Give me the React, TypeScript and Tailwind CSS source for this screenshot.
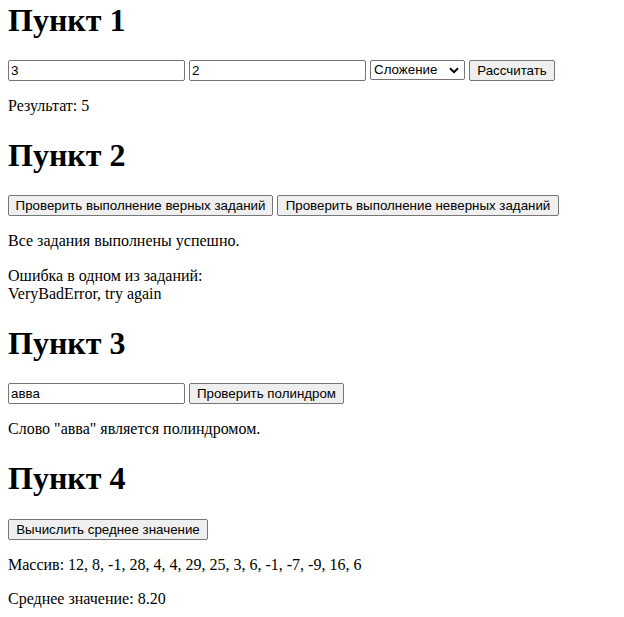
import React from "react";

const serif = { fontFamily: '"Liberation Serif", "Times New Roman", serif' };

const inputCls =
  "box-border h-[21px] w-[177px] rounded-[2px] border border-[#767676] bg-white px-[2px] py-[1px] text-[13.333px] leading-[normal] text-black [font-family:'Liberation_Sans',Arial,sans-serif] outline-none";
const btnCls =
  "box-border h-[21px] rounded-[2px] border border-[#767676] bg-[#efefef] px-[6px] py-[1px] text-center text-[13.333px] leading-[normal] text-black [font-family:'Liberation_Sans',Arial,sans-serif] whitespace-nowrap";

function H({ children, first }: { children: React.ReactNode; first?: boolean }) {
  return (
    <h1
      className={
        (first ? "mt-[1.5px] " : "mt-[21.44px] ") +
        "mb-[21.44px] text-[32px] font-bold leading-[37px] text-black"
      }
    >
      {children}
    </h1>
  );
}

export default function App() {
  return (
    <div className="min-h-[617px] bg-white px-2 text-[16px] leading-[18.4px] text-black" style={serif}>
      <H first>Пункт 1</H>
      <div className="flex items-center gap-[4px]">
        <input className={inputCls} defaultValue="3" />
        <input className={inputCls} defaultValue="2" />
        <div className="box-border flex h-[20px] w-[95px] items-center justify-between rounded-[2px] border border-[#767676] bg-white pl-[3px] pr-[5px] text-[13.333px] [font-family:'Liberation_Sans',Arial,sans-serif]">
          <span>Сложение</span>
          <svg width="10" height="7" viewBox="0 0 10 7" className="mt-[1px]">
            <path d="M1 1.2 L5 5.2 L9 1.2" fill="none" stroke="#000" strokeWidth="2" />
          </svg>
        </div>
        <button className={btnCls + " w-[86px]"}>Рассчитать</button>
      </div>
      <p className="my-4">Результат: 5</p>

      <H>Пункт 2</H>
      <div className="flex items-center gap-[4px]">
        <button className={btnCls + " w-[265px]"}>Проверить выполнение верных заданий</button>
        <button className={btnCls + " w-[282px]"}>Проверить выполнение неверных заданий</button>
      </div>
      <p className="my-4">Все задания выполнены успешно.</p>
      <p className="my-4">
        Ошибка в одном из заданий:
        <br />
        VeryBadError, try again
      </p>

      <H>Пункт 3</H>
      <div className="flex items-center gap-[4px]">
        <input className={inputCls} defaultValue="авва" />
        <button className={btnCls + " w-[155px]"}>Проверить полиндром</button>
      </div>
      <p className="my-4">Слово "авва" является полиндромом.</p>

      <H>Пункт 4</H>
      <div className="flex">
        <button className={btnCls + " w-[200px]"}>Вычислить среднее значение</button>
      </div>
      <p className="my-4">Массив: 12, 8, -1, 28, 4, 4, 29, 25, 3, 6, -1, -7, -9, 16, 6</p>
      <p className="my-4">Среднее значение: 8.20</p>
    </div>
  );
}
